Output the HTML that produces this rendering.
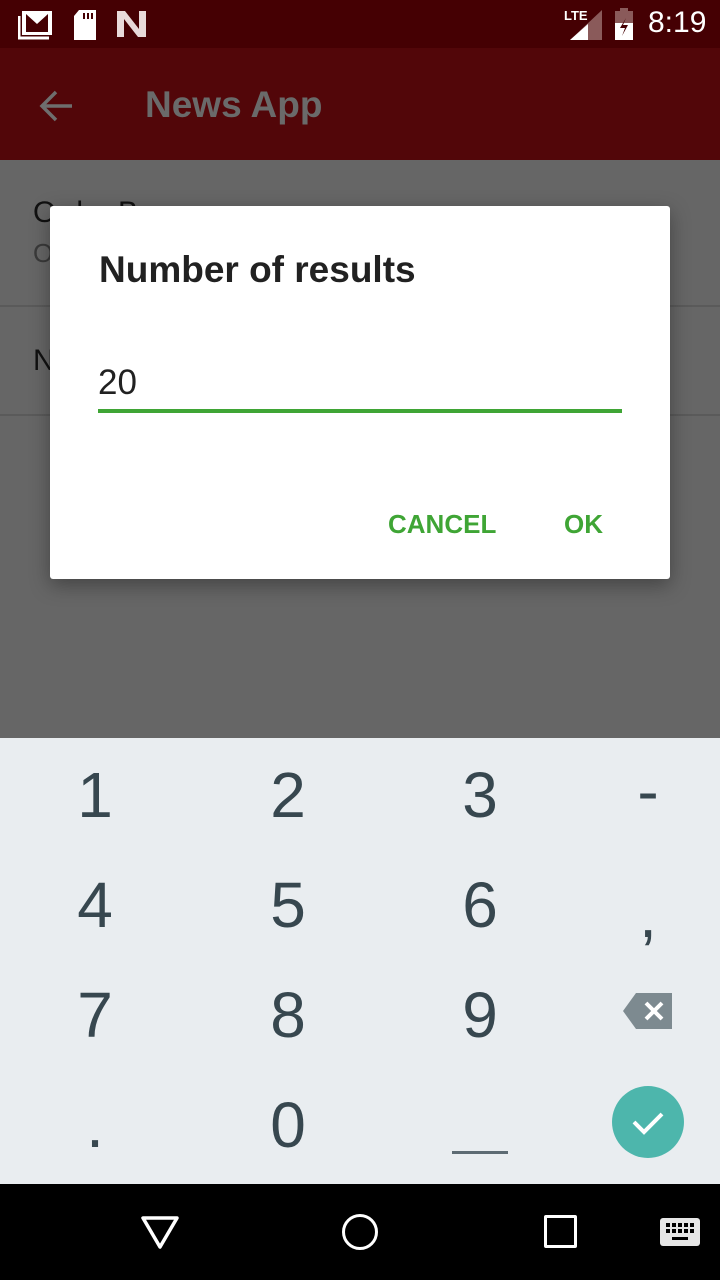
<!DOCTYPE html>
<html><head><style>
*{margin:0;padding:0;box-sizing:border-box}
body{width:720px;height:1280px;overflow:hidden;position:relative;font-family:"Liberation Sans",sans-serif;background:#666}
.a{position:absolute}
.k{position:absolute;font-size:64px;color:#37474f;width:120px;text-align:center;line-height:64px}
</style></head><body>
<div class="a" style="left:0;top:0;width:720px;height:48px;background:#450003"></div>
<svg class="a" style="left:18px;top:10px" width="36" height="30"><rect x="4" y="1" width="30" height="24" fill="#fff"/><path d="M8 4v18h22V4l-11 10z" fill="#450003"/><path d="M1 6v22h30" stroke="#fff" stroke-width="3" fill="none"/></svg>
<svg class="a" style="left:72px;top:10px" width="26" height="30"><path d="M7 0h17v30H2V6z" fill="#fff"/><rect x="11" y="3" width="2" height="6" fill="#450003"/><rect x="15" y="3" width="2" height="6" fill="#450003"/><rect x="19" y="3" width="2" height="6" fill="#450003"/></svg>
<svg class="a" style="left:117px;top:11px" width="30" height="26"><path d="M0 0h8l14 18V0h7v26h-8L7 8v18H0z" fill="#e8dada"/></svg>
<div class="a" style="left:564px;top:8px;color:#fff;font-size:13px;font-weight:bold">LTE</div>
<svg class="a" style="left:568px;top:10px" width="34" height="30"><path d="M34 0v30H2z" fill="#8a5a5a"/><path d="M20 14v16H2z" fill="#fff"/></svg>
<svg class="a" style="left:614px;top:8px" width="22" height="32"><rect x="6" y="0" width="8" height="4" fill="#8a5a5a"/><rect x="1" y="3" width="18" height="29" fill="#fff"/><rect x="1" y="3" width="18" height="12" fill="#8a5a5a"/><path d="M12 10l-6 10h5l-3 8 6-11h-5z" fill="#450003"/></svg>
<div class="a" style="left:648px;top:6px;color:#fff;font-size:30px">8:19</div>
<div class="a" style="left:0;top:48px;width:720px;height:112px;background:#520609"></div>
<svg class="a" style="left:36px;top:86px" width="40" height="40"><path d="M36 20H6M20 6L6 20l14 14" stroke="#6e6e6e" stroke-width="3.5" fill="none"/></svg>
<div class="a" style="left:145px;top:84px;color:#6a6a6a;font-size:37px;font-weight:bold">News App</div>
<div class="a" style="left:33px;top:196px;color:#111;font-size:30px">Order By</div>
<div class="a" style="left:33px;top:238px;color:#3a3a3a;font-size:26px">Oldest</div>
<div class="a" style="left:0;top:305px;width:720px;height:2px;background:#5a5a5a"></div>
<div class="a" style="left:33px;top:344px;color:#111;font-size:30px">Number</div>
<div class="a" style="left:0;top:414px;width:720px;height:2px;background:#5a5a5a"></div>
<div class="a" style="left:50px;top:206px;width:620px;height:373px;background:#fff;border-radius:3px;box-shadow:0 6px 20px rgba(0,0,0,.35)"></div>
<div class="a" style="left:99px;top:249px;color:#212121;font-size:37px;font-weight:bold">Number of results</div>
<div class="a" style="left:98px;top:363px;color:#212121;font-size:35px">20</div>
<div class="a" style="left:98px;top:409px;width:524px;height:4px;background:#3fa535"></div>
<div class="a" style="left:388px;top:509px;color:#3fa535;font-size:26px;font-weight:bold">CANCEL</div>
<div class="a" style="left:564px;top:509px;color:#3fa535;font-size:26px;font-weight:bold">OK</div>
<div class="a" style="left:0;top:738px;width:720px;height:446px;background:#e9edf0"></div>
<div class="k" style="left:35px;top:763px">1</div><div class="k" style="left:228px;top:763px">2</div><div class="k" style="left:420px;top:763px">3</div><div class="k" style="left:588px;top:759px">-</div>
<div class="k" style="left:35px;top:873px">4</div><div class="k" style="left:228px;top:873px">5</div><div class="k" style="left:420px;top:873px">6</div><div class="k" style="left:588px;top:883px">,</div>
<div class="k" style="left:35px;top:983px">7</div><div class="k" style="left:228px;top:983px">8</div><div class="k" style="left:420px;top:983px">9</div>
<div class="k" style="left:35px;top:1093px">.</div><div class="k" style="left:228px;top:1093px">0</div>
<div class="a" style="left:452px;top:1151px;width:56px;height:3px;background:#5d6b73"></div>
<svg class="a" style="left:622px;top:992px" width="52" height="38"><path d="M14 1h36v36H14L1 19z" fill="#7d8a90"/><path d="M24 11l16 16M40 11L24 27" stroke="#fff" stroke-width="4"/></svg>
<div class="a" style="left:612px;top:1086px;width:72px;height:72px;border-radius:50%;background:#4db6ac"></div>
<svg class="a" style="left:628px;top:1102px" width="40" height="40"><path d="M6 20l10 10 18-18" stroke="#fff" stroke-width="4" fill="none"/></svg>
<div class="a" style="left:0;top:1184px;width:720px;height:96px;background:#000"></div>
<svg class="a" style="left:140px;top:1212px" width="40" height="40"><path d="M3 6h34L20 35z" stroke="#fff" stroke-width="3.5" fill="none" stroke-linejoin="round"/></svg>
<div class="a" style="left:342px;top:1214px;width:36px;height:36px;border:3.5px solid #fff;border-radius:50%"></div>
<div class="a" style="left:544px;top:1215px;width:33px;height:33px;border:3.5px solid #fff;border-radius:2px"></div>
<svg class="a" style="left:660px;top:1218px" width="40" height="28"><rect width="40" height="28" rx="3" fill="#e6e6e6"/><g fill="#000"><rect x="6" y="5" width="4" height="4"/><rect x="12" y="5" width="4" height="4"/><rect x="18" y="5" width="4" height="4"/><rect x="24" y="5" width="4" height="4"/><rect x="30" y="5" width="4" height="4"/><rect x="6" y="11" width="4" height="4"/><rect x="12" y="11" width="4" height="4"/><rect x="18" y="11" width="4" height="4"/><rect x="24" y="11" width="4" height="4"/><rect x="30" y="11" width="4" height="4"/><rect x="12" y="19" width="16" height="3"/></g></svg>
</body></html>
